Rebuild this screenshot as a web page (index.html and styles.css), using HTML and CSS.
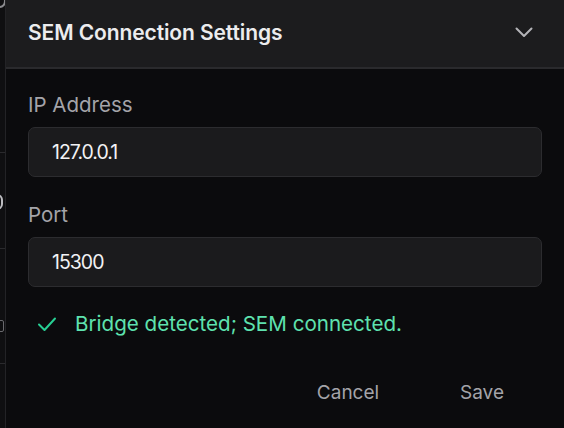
FILE: index.html
```html
<!DOCTYPE html>
<html lang="en">
<head>
<meta charset="utf-8">
<title>SEM Connection Settings</title>
<link rel="stylesheet" href="styles.css">
</head>
<body>
<div class="app">
  <div class="backdrop">
    <span class="bd-arc"></span>
    <span class="bd-rule r1"></span>
    <span class="bd-mark"></span>
    <span class="bd-rule r2"></span>
    <span class="bd-icon"></span>
    <span class="bd-rule r3"></span>
  </div>
  <section class="panel">
    <header class="panel-head">
      <h2 class="panel-title">SEM Connection Settings</h2>
      <button class="chev" aria-label="Collapse">
        <svg width="18" height="11" viewBox="0 0 18 11"><path d="M1.5 1.5 L9 9 L16.5 1.5" fill="none" stroke="#b4b4b8" stroke-width="2" stroke-linecap="round" stroke-linejoin="round"/></svg>
      </button>
    </header>
    <div class="panel-body">
      <label class="field">
        <span class="field-label">IP Address</span>
        <input class="field-input" type="text" value="127.0.0.1">
      </label>
      <label class="field field-port">
        <span class="field-label">Port</span>
        <input class="field-input" type="text" value="15300">
      </label>
      <div class="status">
        <svg class="status-icon" width="20" height="16" viewBox="0 0 20 16"><path d="M2 8.5 L7.5 14 L18 2.5" fill="none" stroke="#27cf93" stroke-width="2" stroke-linecap="round" stroke-linejoin="round"/></svg>
        <span class="status-text">Bridge detected; SEM connected.</span>
      </div>
      <div class="actions">
        <button class="btn">Cancel</button>
        <button class="btn">Save</button>
      </div>
    </div>
  </section>
</div>
</body>
</html>
```

FILE: styles.css
```css
* { box-sizing: border-box; }
html, body {
  margin: 0;
  padding: 0;
  width: 564px;
  height: 428px;
  overflow: hidden;
  background: #0b0b0d;
  font-family: "Inter", "Roboto", "Liberation Sans", sans-serif;
}
.app {
  display: flex;
  height: 428px;
}
.backdrop {
  position: relative;
  width: 5px;
  flex: none;
  background: #0f0f11;
  overflow: hidden;
}
.bd-arc {
  position: absolute;
  left: -6px;
  top: -6px;
  width: 12px;
  height: 14px;
  border: 2px solid #8a8a8e;
  border-radius: 50%;
}
.bd-mark {
  position: absolute;
  left: -5px;
  top: 194px;
  width: 8px;
  height: 16px;
  border: 2px solid #bdbdc1;
  border-left: none;
  border-radius: 0 6px 6px 0;
}
.bd-rule {
  position: absolute;
  left: 0;
  width: 5px;
  height: 1px;
  background: #2a2a2d;
}
.r1 { top: 152px; }
.r2 { top: 248px; }
.r3 { top: 363px; }
.bd-icon {
  position: absolute;
  left: -6px;
  top: 320px;
  width: 10px;
  height: 12px;
  border: 1.5px solid #6a6a6e;
  border-radius: 2px;
}
.panel {
  flex: 1;
  display: flex;
  flex-direction: column;
  border-left: 1px solid #232326;
  background: #0b0b0d;
}
.panel-head {
  height: 69px;
  flex: none;
  display: flex;
  align-items: center;
  justify-content: space-between;
  padding: 0 22px 2px 22px;
  background: #1c1c1e;
  border-bottom: 2px solid #2a2a2d;
}
.panel-title {
  margin: 0;
  font-size: 21px;
  font-weight: 600;
  color: #ececee;
  letter-spacing: -0.1px;
}
.chev {
  display: flex;
  align-items: center;
  justify-content: center;
  width: 30px;
  height: 30px;
  margin-right: 3px;
  padding: 0;
  border: none;
  background: transparent;
}
.panel-body {
  padding: 24px 22px 0 22px;
  display: flex;
  flex-direction: column;
}
.field {
  display: flex;
  flex-direction: column;
}
.field-port { margin-top: 26px; }
.field-label {
  font-size: 20.5px;
  line-height: 24px;
  color: #a4a4a9;
  margin-bottom: 10px;
}
.field-input {
  height: 50px;
  width: 100%;
  border: 1px solid #2c2c2f;
  border-radius: 7px;
  background: #1b1b1d;
  color: #f2f2f4;
  font-family: inherit;
  font-size: 19.5px;
  letter-spacing: -1px;
  padding: 0 0 0 23px;
  outline: none;
}
.status {
  margin-top: 25px;
  display: flex;
  align-items: center;
  height: 24px;
  padding-left: 9px;
}
.status-icon {
  flex: none;
  margin-right: 18px;
}
.status-text {
  font-size: 20.6px;
  line-height: 24px;
  color: #5ee2af;
}
.actions {
  margin-top: 36px;
  display: flex;
  justify-content: flex-end;
  gap: 34px;
  padding-right: 10px;
}
.btn {
  width: 100px;
  height: 40px;
  border: none;
  background: transparent;
  color: #a4a4a9;
  font-family: inherit;
  font-size: 19px;
  padding: 0;
}
```
